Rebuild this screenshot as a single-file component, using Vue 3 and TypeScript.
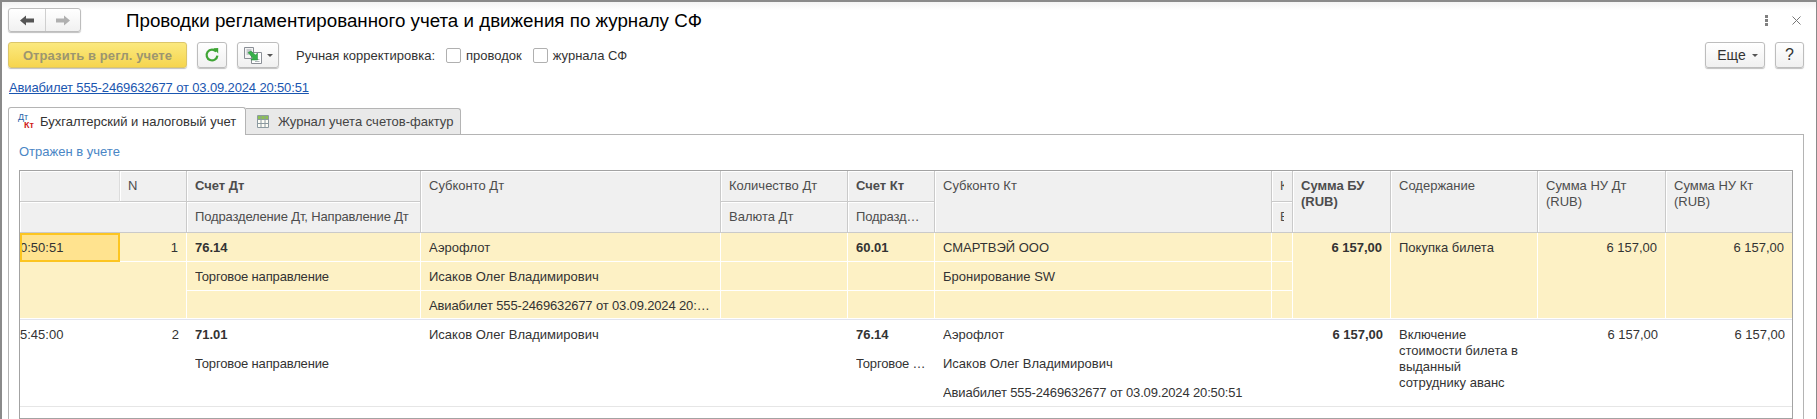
<script setup lang="ts">
import { computed } from 'vue';

interface Cell {
  text?: string;
  col: number;
  row: number;
  colSpan?: number;
  rowSpan?: number;
  cls?: string;
}

// ширины колонок таблицы
const columns = [100, 67, 234, 300, 127, 87, 337, 21, 98, 147, 128, 127];
const gridStyle = { gridTemplateColumns: columns.map((w) => `${w}px`).join(' ') };

const ticket = 'Авиабилет 555-2469632677 от 03.09.2024 20:50:51';
const sum = '6 157,00';

const headCells: Cell[] = [
  { col: 1, row: 1, cls: 'soft' },
  { text: 'N', col: 2, row: 1 },
  { text: 'Счет Дт', col: 3, row: 1, cls: 'b' },
  { text: 'Субконто Дт', col: 4, row: 1, rowSpan: 2 },
  { text: 'Количество Дт', col: 5, row: 1 },
  { text: 'Счет Кт', col: 6, row: 1, cls: 'b' },
  { text: 'Субконто Кт', col: 7, row: 1, rowSpan: 2 },
  { text: 'К', col: 8, row: 1, cls: 'cut' },
  { text: 'Сумма БУ\n(RUB)', col: 9, row: 1, rowSpan: 2, cls: 'b wrap' },
  { text: 'Содержание', col: 10, row: 1, rowSpan: 2 },
  { text: 'Сумма НУ Дт\n(RUB)', col: 11, row: 1, rowSpan: 2, cls: 'wrap' },
  { text: 'Сумма НУ Кт\n(RUB)', col: 12, row: 1, rowSpan: 2, cls: 'wrap' },
  { col: 1, row: 2, colSpan: 2 },
  { text: 'Подразделение Дт, Направление Дт', col: 3, row: 2, cls: 'tight' },
  { text: 'Валюта Дт', col: 5, row: 2 },
  { text: 'Подразделение Кт', col: 6, row: 2, cls: 'tight' },
  { text: 'В', col: 8, row: 2, cls: 'cut' },
];

const selectedCells: Cell[] = [
  { text: '0:50:51', col: 1, row: 3, cls: 'current' },
  { text: '1', col: 2, row: 3, cls: 'right' },
  { col: 1, row: 4, colSpan: 2, rowSpan: 2 },
  { text: '76.14', col: 3, row: 3, cls: 'b' },
  { text: 'Торговое направление', col: 3, row: 4, cls: 'tight' },
  { col: 3, row: 5 },
  { text: 'Аэрофлот', col: 4, row: 3 },
  { text: 'Исаков Олег Владимирович', col: 4, row: 4 },
  { text: ticket, col: 4, row: 5, cls: 'tight' },
  { col: 5, row: 3 },
  { col: 5, row: 4 },
  { col: 5, row: 5 },
  { text: '60.01', col: 6, row: 3, cls: 'b' },
  { col: 6, row: 4 },
  { col: 6, row: 5 },
  { text: 'СМАРТВЭЙ ООО', col: 7, row: 3 },
  { text: 'Бронирование SW', col: 7, row: 4 },
  { col: 7, row: 5 },
  { col: 8, row: 3 },
  { col: 8, row: 4 },
  { col: 8, row: 5 },
  { text: sum, col: 9, row: 3, rowSpan: 3, cls: 'b right' },
  { text: 'Покупка билета', col: 10, row: 3, rowSpan: 3 },
  { text: sum, col: 11, row: 3, rowSpan: 3, cls: 'right' },
  { text: sum, col: 12, row: 3, rowSpan: 3, cls: 'right' },
];

const plainCells: Cell[] = [
  { text: '5:45:00', col: 1, row: 7, cls: 'time' },
  { text: '2', col: 2, row: 7, cls: 'right' },
  { text: '71.01', col: 3, row: 7, cls: 'b' },
  { text: 'Торговое направление', col: 3, row: 8, cls: 'tight' },
  { text: 'Исаков Олег Владимирович', col: 4, row: 7 },
  { text: '76.14', col: 6, row: 7, cls: 'b' },
  { text: 'Торговое направление', col: 6, row: 8, cls: 'tight' },
  { text: 'Аэрофлот', col: 7, row: 7 },
  { text: 'Исаков Олег Владимирович', col: 7, row: 8 },
  { text: ticket, col: 7, row: 9, rowSpan: 2, cls: 'tight' },
  { text: sum, col: 9, row: 7, cls: 'b right' },
  { text: 'Включение\nстоимости билета в\nвыданный\nсотруднику аванс', col: 10, row: 7, rowSpan: 3, cls: 'wrap' },
  { text: sum, col: 11, row: 7, cls: 'right' },
  { text: sum, col: 12, row: 7, cls: 'right' },
];

const place = (c: Cell) => ({
  gridColumn: `${c.col} / span ${c.colSpan ?? 1}`,
  gridRow: `${c.row} / span ${c.rowSpan ?? 1}`,
});

const groups = computed(() => [
  { kind: 'head', cells: headCells },
  { kind: 'sel', cells: selectedCells },
  { kind: 'plain', cells: plainCells },
]);
</script>

<template>
  <div class="window">
    <div class="top">
      <div class="nav">
        <span class="nav-btn">
          <svg width="14" height="11" viewBox="0 0 14 11"><path d="M0 5.5 6 0.5V3.5H14V7.5H6V10.5Z" fill="#555" /></svg>
        </span>
        <span class="nav-btn next">
          <svg width="14" height="11" viewBox="0 0 14 11"><path d="M14 5.5 8 0.5V3.5H0V7.5H8V10.5Z" fill="#b0b0b0" /></svg>
        </span>
      </div>
      <h1 class="title">Проводки регламентированного учета и движения по журналу СФ</h1>
      <span class="dots"><i></i><i></i><i></i></span>
      <svg class="close" width="9" height="9" viewBox="0 0 9 9"><path d="M0.5 0.5 8.5 8.5M8.5 0.5 0.5 8.5" stroke="#777" fill="none" /></svg>
    </div>

    <div class="toolbar">
      <button class="btn yellow">Отразить в регл. учете</button>
      <button class="btn refresh">
        <svg width="16" height="16" viewBox="0 0 16 16">
          <path d="M12.2 4.6A5.4 5.4 0 1 0 13.4 8.6" stroke="#3fa535" stroke-width="2.2" fill="none" />
          <path d="M9.4 1.2 14.2 1V6.6Z" fill="#3fa535" />
        </svg>
      </button>
      <button class="btn split">
        <svg width="18" height="17" viewBox="0 0 18 17">
          <path d="M0.5 0.5H9.5V11.5H0.5Z" fill="#f4f4f4" stroke="#8a8f96" />
          <path d="M2.5 3H7.5M2.5 5H7.5M2.5 7H5" stroke="#9aa0a8" />
          <path d="M7.5 5.5H17.5V16.5H7.5Z" fill="#fff" stroke="#8a8f96" />
          <path d="M11 12.5H15.5M11 14.5H15.5" stroke="#b0b5ba" />
          <path d="M4 5.5 7 4 11.5 8 13.5 6V13H6.8L8.8 11Z" fill="#38b04a" stroke="#23863a" stroke-width="0.5" />
        </svg>
        <i class="caret"></i>
      </button>
      <span class="label">Ручная корректировка:</span>
      <label class="check"><i class="box"></i>проводок</label>
      <label class="check"><i class="box"></i>журнала СФ</label>
      <button class="btn more">Еще<i class="caret"></i></button>
      <button class="btn help">?</button>
    </div>

    <a class="doc-link" href="#">Авиабилет 555-2469632677 от 03.09.2024 20:50:51</a>

    <div class="tabs">
      <div class="tab active">
        <svg class="dtkt" width="16" height="16" viewBox="0 0 16 16">
          <text x="0" y="6" class="ico-dt">Дт</text>
          <text x="6" y="14" class="ico-kt">Кт</text>
        </svg>
        Бухгалтерский и налоговый учет
      </div>
      <div class="tab">
        <svg width="12" height="13" viewBox="0 0 12 13">
          <path d="M0.5 0.5H11.5V12.5H0.5Z" fill="#fdfdf6" stroke="#8c9aa0" />
          <path d="M1 1H11V4H1Z" fill="#8cc152" />
          <path d="M4 1V12M8 1V12M1 4.5H11M1 8.5H11" stroke="#8c9aa0" />
        </svg>
        Журнал учета счетов-фактур
      </div>
    </div>

    <div class="panel">
      <div class="status">Отражен в учете</div>
      <div class="table" :style="gridStyle">
        <template v-for="g in groups" :key="g.kind">
          <div
            v-for="(c, i) in g.cells"
            :key="i"
            class="cell"
            :class="[g.kind, c.cls]"
            :style="place(c)"
          >
            <span v-if="c.text">{{ c.text }}</span>
          </div>
        </template>
        <div class="sep one"></div>
        <div class="sep two"></div>
      </div>
    </div>
  </div>
</template>

<style scoped>
.window {
  box-sizing: border-box;
  width: 1817px;
  height: 419px;
  border-top: 2px solid #8a8a8a;
  border-left: 2px solid #8a8a8a;
  border-right: 1px solid #8a8a8a;
  padding: 0 12px 0 6px;
  display: flex;
  flex-direction: column;
  background: linear-gradient(#f3f3f3, #fff 8px);
  overflow: hidden;
  font-family: "Liberation Sans", Arial, sans-serif;
  font-size: 13px;
  color: #333;
}

.top {
  display: flex;
  align-items: center;
  height: 24px;
  margin-top: 6px;
  flex-shrink: 0;
}

.nav {
  display: flex;
  width: 73px;
  height: 24px;
  box-sizing: border-box;
  border: 1px solid #bdbdbd;
  border-radius: 3px;
  background: linear-gradient(#fff, #f1f1f1);
  box-shadow: 0 1px 1px rgba(0, 0, 0, 0.25);
}

.nav-btn {
  width: 36px;
  display: flex;
  align-items: center;
  justify-content: center;
}

.nav-btn.next {
  flex: 1;
  border-left: 1px solid #cfcfcf;
}

.title {
  margin: 2px 0 0 45px;
  font-size: 18.75px;
  font-weight: normal;
  color: #000;
  flex: 1;
  line-height: 24px;
}

.dots {
  display: flex;
  flex-direction: column;
  gap: 1px;
  margin-right: 24px;
}

.dots i {
  width: 3px;
  height: 3px;
  background: #808080;
}

.close {
  margin-right: 3px;
}

.toolbar {
  display: flex;
  align-items: center;
  height: 26px;
  margin-top: 10px;
  flex-shrink: 0;
}

.btn {
  box-sizing: border-box;
  height: 26px;
  border: 1px solid #bdbdbd;
  border-radius: 3px;
  background: linear-gradient(#fff, #f0f0f0);
  box-shadow: 0 1px 1px rgba(0, 0, 0, 0.25);
  display: flex;
  align-items: center;
  justify-content: center;
  padding: 0;
  font: inherit;
  color: #333;
}

.yellow {
  width: 179px;
  background: linear-gradient(#fbe97f, #f6d54e);
  border-color: #dcc66a;
  color: #9c9670;
  font-weight: bold;
  letter-spacing: 0.1px;
}

.refresh {
  width: 30px;
  margin-left: 10px;
}

.split {
  width: 42px;
  margin-left: 10px;
  gap: 5px;
}

.caret {
  width: 0;
  height: 0;
  border-left: 3px solid transparent;
  border-right: 3px solid transparent;
  border-top: 3px solid #555;
}

.label {
  margin-left: 17px;
  margin-right: 11px;
}

.check {
  display: flex;
  align-items: center;
  gap: 5px;
  margin-right: 11px;
}

.box {
  box-sizing: border-box;
  width: 15px;
  height: 15px;
  border: 1px solid #b0b0b0;
  border-radius: 2px;
  background: #fff;
}

.more {
  width: 60px;
  margin-left: auto;
  padding-left: 5px;
  gap: 6px;
  font-size: 14px;
}

.help {
  width: 29px;
  margin-left: 10px;
  font-size: 16px;
}

.doc-link {
  margin: 12px 0 0 1px;
  line-height: 16px;
  align-self: flex-start;
  color: #1a56b0;
  text-decoration: underline;
  letter-spacing: -0.14px;
  flex-shrink: 0;
}

.tabs {
  display: flex;
  margin-top: 11px;
  height: 27px;
  position: relative;
  z-index: 1;
  flex-shrink: 0;
}

.tab {
  box-sizing: border-box;
  width: 215px;
  height: 26px;
  margin-top: 1px;
  border: 1px solid #b4b4b4;
  border-left: none;
  border-bottom: none;
  border-radius: 0 3px 0 0;
  background: #e9e9e9;
  display: flex;
  align-items: center;
  gap: 9px;
  padding-left: 11px;
  color: #444;
}

.tab.active {
  width: 238px;
  height: 28px;
  margin-top: 0;
  border-left: 1px solid #b4b4b4;
  border-radius: 3px 3px 0 0;
  background: #fff;
  gap: 6px;
  padding-left: 9px;
  color: #333;
}

.dtkt {
  overflow: visible;
}

.ico-dt {
  font-size: 9px;
  fill: #1f5fa8;
}

.ico-kt {
  font-size: 9px;
  font-weight: bold;
  fill: #d01c1c;
}

.panel {
  flex: 1;
  min-height: 0;
  border: 1px solid #b4b4b4;
  border-bottom: none;
  padding: 9px 10px 0;
  display: flex;
  flex-direction: column;
}

.status {
  line-height: 16px;
  color: #4a86c5;
  flex-shrink: 0;
}

.table {
  flex: 1;
  min-height: 0;
  margin-top: 10px;
  border: 1px solid #a3a3a3;
  display: grid;
  grid-template-rows: 31px 31px 29px 29px 28px 1px 29px 29px 28px 1px 1fr;
  overflow: hidden;
  line-height: 16px;
}

.cell {
  box-sizing: border-box;
  padding: 7px 8px 0;
  min-width: 0;
  overflow: hidden;
}

.cell span {
  display: block;
  overflow: hidden;
  white-space: nowrap;
  text-overflow: ellipsis;
}

.head {
  background: #f0f0f0;
  border-right: 1px solid #cacaca;
  border-bottom: 1px solid #cacaca;
  box-shadow: inset 1px 1px 0 #fff;
  color: #4d4d4d;
}

.head.soft {
  border-right-color: #dcdcdc;
}

.sel {
  background: #fdf1c5;
  border-right: 1px solid #fff;
  border-bottom: 1px solid #fff;
}

.plain {
  background: #fff;
  padding-top: 7px;
}

.b {
  font-weight: bold;
}

.right {
  text-align: right;
}

.tight {
  letter-spacing: -0.15px;
}

.cell.wrap span {
  white-space: pre-line;
}

.cell.cut span {
  text-overflow: clip;
}

.cell.current {
  background: #ffe38f;
  border: 2px solid #fcc521;
  padding: 5px 0 0;
}

.cell.current span {
  text-indent: -2px;
}

.cell.time {
  padding-left: 0;
}

.sep {
  grid-column: 1 / -1;
}

.sep.one {
  grid-row: 6;
  background: #e2e4ee;
}

.sep.two {
  grid-row: 10;
  background: #e6e6e6;
}
</style>
